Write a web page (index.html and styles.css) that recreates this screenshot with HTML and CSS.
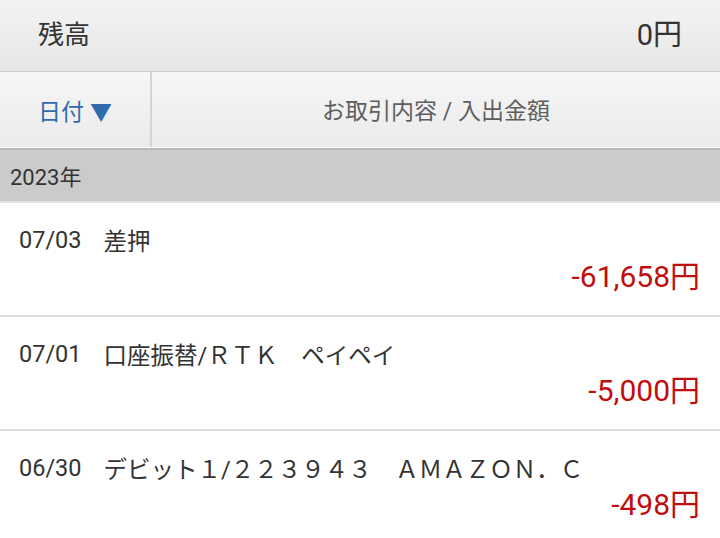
FILE: index.html
```html
<!DOCTYPE html>
<html lang="ja">
<head>
<meta charset="utf-8">
<title>入出金明細</title>
<link rel="stylesheet" href="styles.css">
</head>
<body>
<div class="balance">
  <span class="balance-label">残高</span>
  <span class="balance-value">0円</span>
</div>
<div class="colhead">
  <div class="col-date">日付 <span class="tri">▼</span></div>
  <div class="col-desc">お取引内容 / 入出金額</div>
</div>
<div class="year">2023年</div>
<ul class="list">
  <li class="tx">
    <div class="tx-line"><span class="tx-date">07/03</span><span class="tx-desc">差押</span></div>
    <div class="tx-amt">-61,658円</div>
  </li>
  <li class="tx">
    <div class="tx-line"><span class="tx-date">07/01</span><span class="tx-desc">口座振替/ＲＴＫ　ペイペイ</span></div>
    <div class="tx-amt">-5,000円</div>
  </li>
  <li class="tx">
    <div class="tx-line"><span class="tx-date">06/30</span><span class="tx-desc">デビット１/２２３９４３　ＡＭＡＺＯＮ．Ｃ</span></div>
    <div class="tx-amt">-498円</div>
  </li>
</ul>
</body>
</html>
```
FILE: styles.css
```css
* { box-sizing: border-box; }
html, body {
  margin: 0;
  padding: 0;
  background: #ffffff;
  font-family: Roboto, "Noto Sans CJK JP", sans-serif;
  color: #333333;
}
.balance {
  height: 72px;
  display: flex;
  align-items: center;
  justify-content: space-between;
  padding: 0 38px 7px 38px;
  background: linear-gradient(#f3f3f3, #e7e7e7);
  border-bottom: 1px solid #cfcfcf;
}
.balance-label { font-size: 26px; }
.balance-value { font-size: 29px; }
.colhead {
  display: flex;
  height: 76px;
  background: linear-gradient(#f6f6f6, #ebebeb);
  border-bottom: 1px solid #ffffff;
}
.col-date {
  width: 152px;
  display: flex;
  align-items: center;
  justify-content: center;
  gap: 6px;
  color: #2f6cae;
  font-size: 23px;
  border-right: 2px solid #d4d4d4;
}
.tri { font-size: 22px; }
.col-desc {
  flex: 1;
  display: flex;
  align-items: center;
  justify-content: center;
  color: #5e5e5e;
  font-size: 23px;
  padding-bottom: 2px;
}
.year {
  height: 55px;
  display: flex;
  align-items: center;
  padding: 0 0 2px 10px;
  font-size: 22px;
  background: #cbcbcb;
  border-top: 2px solid #b9b9b9;
  border-bottom: 2px solid #e2e2e2;
}
.list {
  list-style: none;
  margin: 0;
  padding: 0;
}
.tx {
  padding: 22px 20px 20px 19px;
  border-bottom: 2px solid #dedede;
}
.tx-line {
  display: flex;
  align-items: center;
  height: 30px;
  font-size: 23.5px;
  white-space: nowrap;
}
.tx-date { margin-right: 22px; }
.tx-amt {
  margin-top: 4px;
  height: 36px;
  line-height: 36px;
  text-align: right;
  font-size: 30px;
  color: #c00d0d;
}
```
